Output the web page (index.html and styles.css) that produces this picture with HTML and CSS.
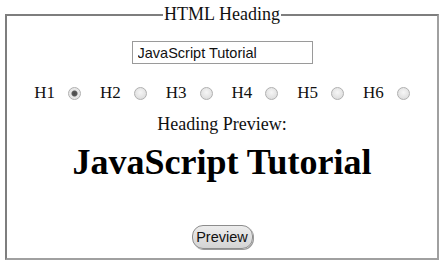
FILE: index.html
```html
<!DOCTYPE html>
<html>
<head>
<meta charset="utf-8">
<link rel="stylesheet" href="styles.css">
</head>
<body>
<fieldset class="box">
  <legend class="legend">HTML Heading</legend>
  <div class="content">
    <input class="text-input" type="text" value="JavaScript Tutorial">
    <div class="radios">
      <label class="opt">H1 <input type="radio" name="h" class="radio" checked></label>
      <label class="opt">H2 <input type="radio" name="h" class="radio"></label>
      <label class="opt">H3 <input type="radio" name="h" class="radio"></label>
      <label class="opt">H4 <input type="radio" name="h" class="radio"></label>
      <label class="opt">H5 <input type="radio" name="h" class="radio"></label>
      <label class="opt">H6 <input type="radio" name="h" class="radio"></label>
    </div>
    <div class="preview-label">Heading Preview:</div>
    <h1 class="preview">JavaScript Tutorial</h1>
    <button class="btn" type="button">Preview</button>
  </div>
</fieldset>
</body>
</html>
```
FILE: styles.css
```css
html, body {
  margin: 0;
  padding: 0;
  background: #fff;
}
body {
  font-family: "Liberation Serif", "Times New Roman", serif;
  font-size: 18px;
  color: #111;
  padding-top: 4px;
}
.box {
  margin: 0 5px;
  padding: 0;
  border: 2px solid #8a8a8a;
  border-color: #7e7e7e #a0a0a0 #a0a0a0 #7e7e7e;
  height: 256px;
  box-sizing: border-box;
  min-width: 0;
}
.legend {
  margin: 0 auto;
  padding: 0 1px;
  font-size: 18px;
  line-height: 21px;
}
.content {
  display: flex;
  flex-direction: column;
  align-items: center;
}
.text-input {
  margin-top: 16px;
  width: 181px;
  height: 23px;
  box-sizing: border-box;
  border: 1px solid #9a9a9a;
  padding: 0 5px;
  font-family: "Liberation Sans", Arial, sans-serif;
  font-size: 14.5px;
  color: #111;
  outline: none;
}
.radios {
  display: flex;
  margin-top: 19px;
  gap: 19px;
  line-height: 20px;
  font-size: 17px;
}
.opt {
  display: flex;
  align-items: center;
  gap: 13px;
}
.radio {
  appearance: none;
  -webkit-appearance: none;
  margin: 0;
  width: 13px;
  height: 13px;
  border-radius: 50%;
  border: 1px solid #b0b0b0;
  background: radial-gradient(circle at 50% 40%, #f6f6f6 0%, #e0e0e0 70%, #d2d2d2 100%);
  box-sizing: border-box;
}
.radio:checked {
  background: radial-gradient(circle, #4a4a4a 0, #5a5a5a 2.5px, #e6e6e6 3.5px, #ececec 100%);
}
.preview-label {
  margin-top: 11px;
  line-height: 21px;
}
.preview {
  margin: 7px 0 0;
  font-size: 36px;
  line-height: 41px;
  font-weight: bold;
  color: #000;
}
.btn {
  margin-top: 42px;
  width: 61px;
  height: 24px;
  padding: 0;
  border: 1px solid #8c8c8c;
  border-radius: 11px;
  background: linear-gradient(#ececec, #d4d4d4);
  box-shadow: 1px 1px 0 #9a9a9a;
  font-family: "Liberation Sans", Arial, sans-serif;
  font-size: 14.5px;
  color: #111;
}
```
